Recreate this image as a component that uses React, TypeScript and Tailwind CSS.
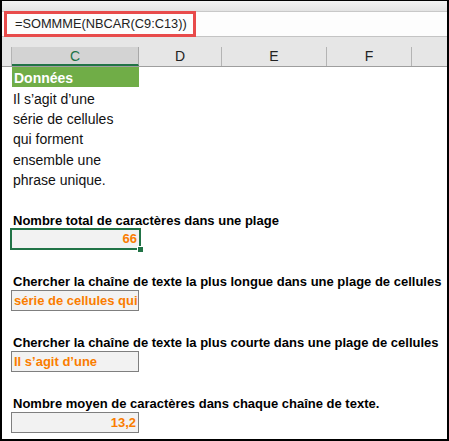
import React from 'react';

const FONT = "font-['Liberation_Sans',Arial,sans-serif]";

function Row({ children, className = '' }: { children?: React.ReactNode; className?: string }) {
  return <div className={`h-[20.33px] relative flex items-end ${className}`}>{children}</div>;
}

function Label({ text }: { text: string }) {
  return (
    <Row>
      <span className="ml-[11px] pb-[1px] leading-[16px] whitespace-nowrap font-bold text-[13px] text-black">{text}</span>
    </Row>
  );
}

function CalcCell({ value, right }: { value: string; right?: boolean }) {
  return (
    <Row className="items-start">
      <div
        className={`ml-[9px] -mt-[1px] w-[128px] h-[21.33px] border border-[#7f7f7f] bg-[#f2f2f2] flex items-end pb-[1px] px-[2px] ${
          right ? 'justify-end' : 'justify-start'
        }`}
      >
        <span className="leading-[16px] whitespace-nowrap font-bold text-[13px] text-[#fa7d00]">{value}</span>
      </div>
    </Row>
  );
}

export default function App() {
  const textLines = ["Il s’agit d’une", 'série de cellules', 'qui forment', 'ensemble une', 'phrase unique.'];

  return (
    <div className={`${FONT} w-[449px] h-[441px] overflow-hidden bg-white border-l-2 border-t border-r-2 border-b-2 border-black relative`}>
      {/* window strip */}
      <div className="h-[11px] bg-gradient-to-b from-[#f2f2f2] to-[#e3e3e3] border-b border-[#c8c8c8]" />

      {/* formula bar */}
      <div className="h-[25px] bg-[#fdfdfd] border-b border-[#c4c4c4] relative">
        <div className="absolute left-[2px] -top-[1px] w-[192px] h-[26px] border-[3px] border-[#e84b4b] flex items-center pl-[8px]">
          <span className="text-[12.8px] text-[#222] whitespace-nowrap leading-none">=SOMMME(NBCAR(C9:C13))</span>
        </div>
      </div>

      {/* column headers */}
      <div className="h-[30px] bg-[#e6e6e6] border-b border-[#9e9e9e] flex flex-col">
        <div className="h-[10px]" />
        <div className="flex h-[19px] text-[14px] leading-[16px] text-[#222]">
          <div className="w-[10px] border-r border-[#b4b4b4]" />
          <div className="w-[127px] bg-[#d3d3d3] border-r border-[#a8a8a8] border-b-2 border-b-[#217346] text-[#217346] flex items-end justify-center">
            C
          </div>
          <div className="w-[83px] border-r border-[#b4b4b4] flex items-end justify-center pb-[2px]">D</div>
          <div className="w-[105px] border-r border-[#b4b4b4] flex items-end justify-center pb-[2px]">E</div>
          <div className="w-[85px] border-r border-[#b4b4b4] flex items-end justify-center pb-[2px]">F</div>
          <div className="flex-1" />
        </div>
      </div>

      {/* sheet */}
      <div className="flex flex-col">
        <Row>
          <div className="ml-[10px] w-[127px] h-full bg-[#70ad47] flex items-end pb-[1px] pl-[2px]">
            <span className="leading-[16px] font-bold text-[14px] text-white">Données</span>
          </div>
        </Row>
        {textLines.map((t) => (
          <Row key={t}>
            <span className="ml-[11px] pb-[1px] leading-[16px] whitespace-nowrap text-[14px] text-[#111]">{t}</span>
          </Row>
        ))}
        <Row />
        <Label text="Nombre total de caractères dans une plage" />
        <Row className="items-start">
          <div className="ml-[8px] -mt-[2px] w-[131px] h-[22px] border-2 border-[#217346] bg-[#f2f2f2] flex items-end justify-end pb-[1px] px-[2px] relative">
            <span className="leading-[16px] font-bold text-[13px] text-[#fa7d00]">66</span>
            <div className="absolute -right-[5px] -bottom-[5px] w-[7px] h-[7px] bg-[#217346] border border-white" />
          </div>
        </Row>
        <Row />
        <Label text="Chercher la chaîne de texte la plus longue dans une plage de cellules" />
        <CalcCell value="série de cellules qui" />
        <Row />
        <Label text="Chercher la chaîne de texte la plus courte dans une plage de cellules" />
        <CalcCell value="Il s’agit d’une" />
        <Row />
        <Label text="Nombre moyen de caractères dans chaque chaîne de texte." />
        <CalcCell value="13,2" right />
      </div>
    </div>
  );
}
